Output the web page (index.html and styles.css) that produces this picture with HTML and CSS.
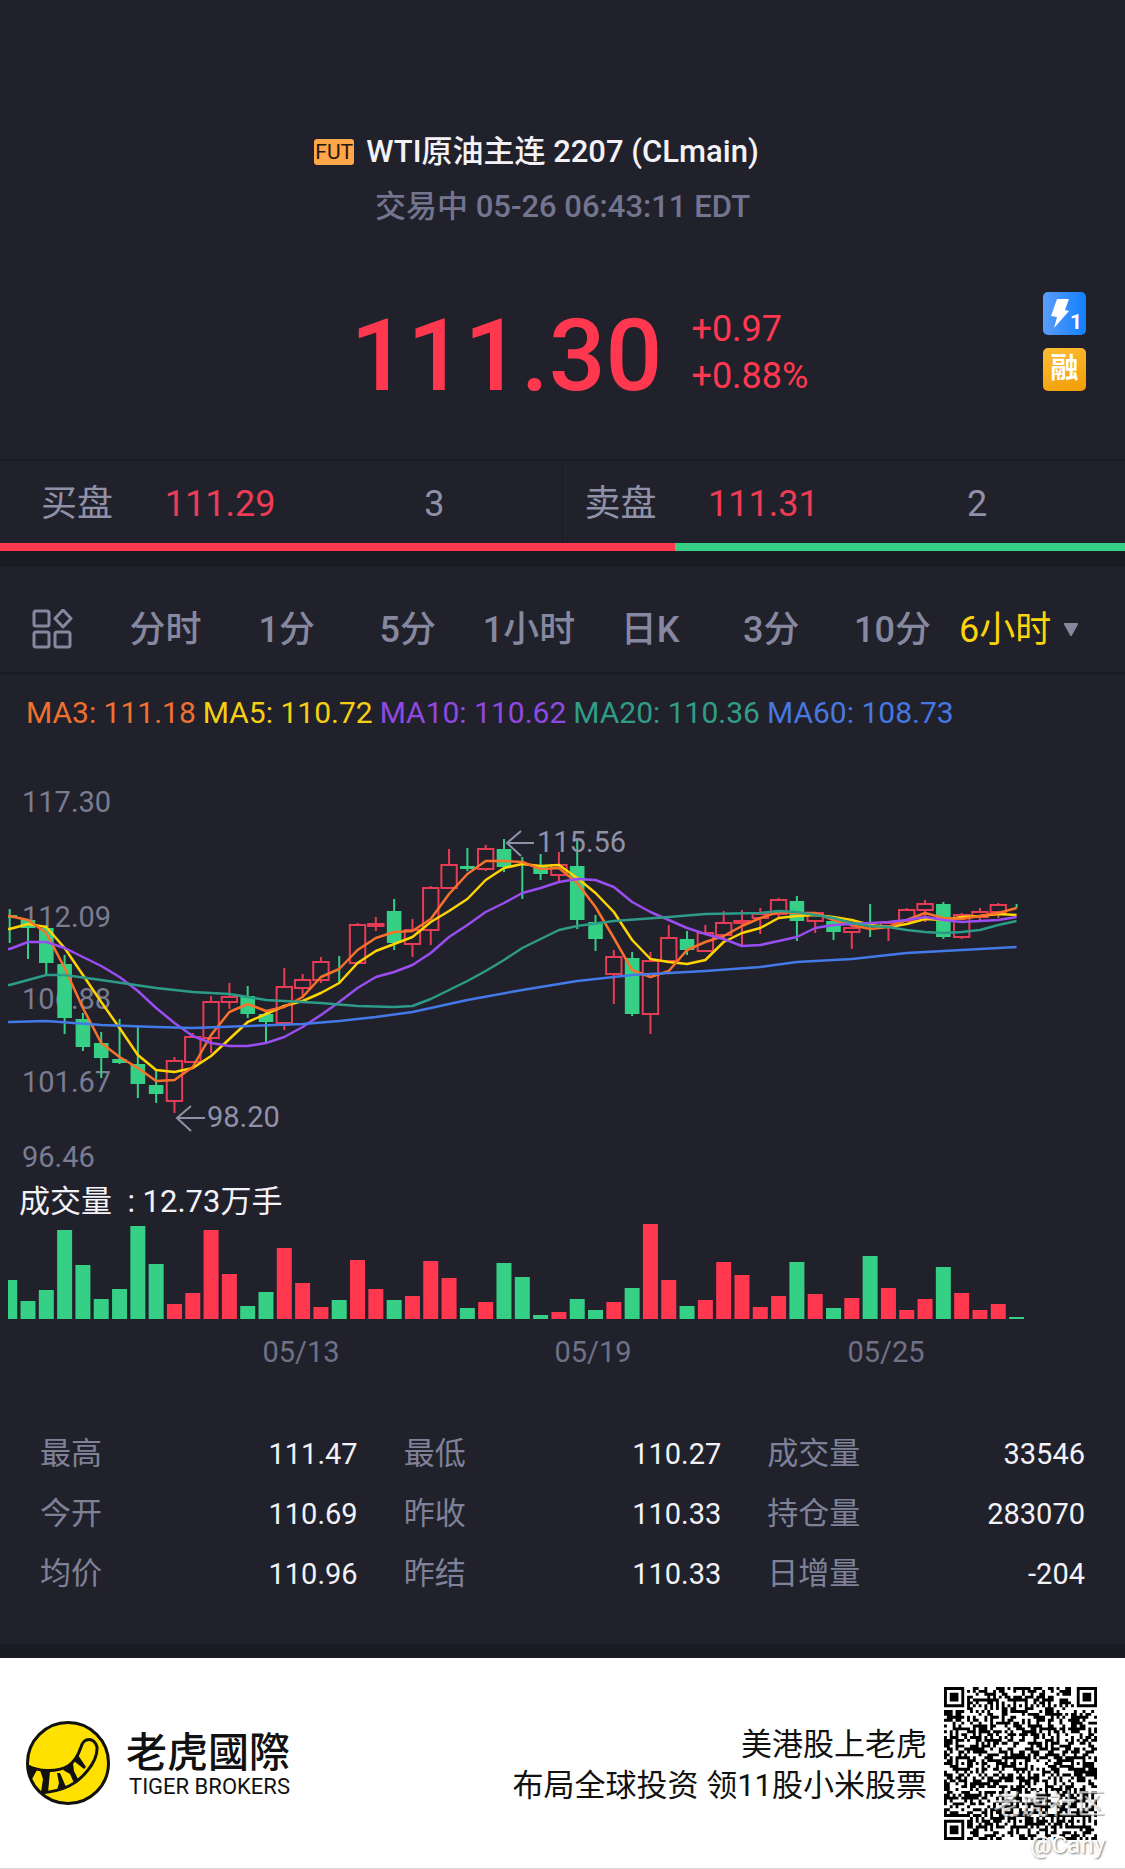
FILE: index.html
```html
<!DOCTYPE html>
<html lang="zh-CN">
<head>
<meta charset="utf-8">
<meta name="viewport" content="width=device-width, initial-scale=1">
<title>WTI原油主连 2207 (CLmain)</title>
<link rel="stylesheet" href="styles.css">
</head>
<body>
<main>
  <header class="head">
    <div class="title-row">
      <span class="fut">FUT</span>
      <h1 class="title">WTI原油主连 2207 (CLmain)</h1>
    </div>
    <p class="status">交易中 05-26 06:43:11 EDT</p>
  </header>

  <section class="quote">
    <strong class="price">111.30</strong>
    <div class="change"><span>+0.97</span><span>+0.88%</span></div>
    <div class="tags">
      <svg class="tag" viewBox="0 0 43 43" role="img" aria-label="Level 1">
        <defs><linearGradient id="blue" x1="0" y1="0" x2="1" y2="0"><stop offset="0" stop-color="#5a9cf8"/><stop offset="1" stop-color="#1280ff"/></linearGradient></defs>
        <rect width="43" height="43" rx="5" fill="url(#blue)"/>
        <path d="M14 7H26L22 18L26 19L11 36L14 25L8 24Z" fill="#fff"/>
        <text x="27" y="37" class="tag-num">1</text>
      </svg>
      <span class="tag margin-tag">融</span>
    </div>
  </section>

  <section class="book">
    <div class="side bid"><span>买盘</span><span class="up">111.29</span><span>3</span></div>
    <div class="side ask"><span>卖盘</span><span class="up">111.31</span><span>2</span></div>
  </section>
  <div class="depth"><i class="depth-bid"></i><i class="depth-ask"></i></div>

  <nav class="tabs">
    <button class="tab" aria-label="指标">
      <svg class="grid-icon" viewBox="0 0 42 42" fill="none" stroke="#86889f" stroke-width="3" stroke-linejoin="round">
        <rect x="2" y="2" width="15" height="15" rx="2"/>
        <path d="M31 1L39 9.500L31 18L23 9.500Z"/>
        <rect x="2" y="23" width="15" height="15" rx="2"/>
        <rect x="23" y="23" width="15" height="15" rx="2"/>
      </svg>
    </button>
    <button class="tab">分时</button>
    <button class="tab">1分</button>
    <button class="tab">5分</button>
    <button class="tab">1小时</button>
    <button class="tab">日K</button>
    <button class="tab">3分</button>
    <button class="tab">10分</button>
    <button class="tab active">6小时<svg class="caret" viewBox="0 0 16 14"><path d="M2 1H14L8 12Z" fill="#86889f" stroke="#86889f" stroke-width="2" stroke-linejoin="round"/></svg></button>
  </nav>

  <ul class="legend">
    <li class="ma3">MA3: 111.18</li>
    <li class="ma5">MA5: 110.72</li>
    <li class="ma10">MA10: 110.62</li>
    <li class="ma20">MA20: 110.36</li>
    <li class="ma60">MA60: 108.73</li>
  </ul>

  <svg class="chart" viewBox="0 0 1125 449" role="img" aria-label="K线图">
    <clipPath id="plot"><rect x="8" y="0" width="1010" height="449"/></clipPath>
    <g class="axis">
      <text x="22" y="80">117.30</text>
      <text x="22" y="195">112.09</text>
      <text x="22" y="277">106.88</text>
      <text x="22" y="360">101.67</text>
      <text x="22" y="435">96.46</text>
    </g>
    <g clip-path="url(#plot)"><g id="candles" transform="translate(0 38)"></g></g>
    <g class="mark">
      <path d="M534 111H507M521 99L507 111L521 124"/>
      <text x="537" y="120">115.56</text>
      <path d="M205 386H177M191 374L177 386L191 399"/>
      <text x="207" y="395">98.20</text>
    </g>
    <g clip-path="url(#plot)"><g id="averages" transform="translate(0 38)"></g></g>
  </svg>

  <p class="volume-label">成交量&nbsp; : 12.73万手</p>
  <svg class="chart" viewBox="0 0 1125 150" role="img" aria-label="成交量">
    <g id="volume"></g>
    <g class="dates">
      <text x="301" y="141">05/13</text>
      <text x="593" y="141">05/19</text>
      <text x="886" y="141">05/25</text>
    </g>
  </svg>

  <dl class="stats">
    <div><dt>最高</dt><dd>111.47</dd></div>
    <div><dt>最低</dt><dd>110.27</dd></div>
    <div><dt>成交量</dt><dd>33546</dd></div>
    <div><dt>今开</dt><dd>110.69</dd></div>
    <div><dt>昨收</dt><dd>110.33</dd></div>
    <div><dt>持仓量</dt><dd>283070</dd></div>
    <div><dt>均价</dt><dd>110.96</dd></div>
    <div><dt>昨结</dt><dd>110.33</dd></div>
    <div><dt>日增量</dt><dd>-204</dd></div>
  </dl>
</main>

<footer class="foot">
  <svg class="logo" viewBox="0 0 84 84" role="img" aria-label="老虎國際">
    <circle cx="42" cy="42" r="40.500" fill="#ffe100" stroke="#111" stroke-width="3"/>
    <path d="M2 45C12 50 30 52 42 45C50 40 53 32 55 26C58 16 68 16 71 26C72 42 54 60 43 65C33 70 25 71 15 72" fill="none" stroke="#111" stroke-width="3"/>
    <path d="M2 44L11 49L5 60ZM14 49L24 50L22 72L15 71L17 58ZM31 52L34 52L40 66L31 69L33 62ZM37 49L47 42L48 50L52 58L48 62L44 53ZM48 40L52 34L60 46L58 48Z" fill="#111"/>
  </svg>
  <div class="brand"><b>老虎國際</b><span>TIGER BROKERS</span></div>
  <p class="slogan">美港股上老虎<br>布局全球投资 领11股小米股票</p>
  <div class="code">
    <svg class="qr" viewBox="0 0 53 53" role="img" aria-label="二维码"><path id="qr" fill="#000"/></svg>
    <span class="stamp">老虎社区</span>
    <span class="author">@Cany</span>
  </div>
</footer>
<script src="chart.js"></script>
</body>
</html>
```
FILE: styles.css
```css
* { box-sizing: border-box; }
body, h1, p, ul, dl, dd { margin: 0; padding: 0; }
body {
  background: #21212b;
  color: #f2f2f7;
  font-family: Roboto, "Noto Sans CJK SC", sans-serif;
  font-size: 31px;
}
.head { padding-top: 129px; }
.title-row { display: grid; grid-template-columns: 1fr auto 1fr; align-items: center; column-gap: 12px; }
.fut {
  justify-self: end;
  width: 40px;
  background: #ffa54a;
  color: #23180e;
  border-radius: 3px;
  font-size: 21px;
  line-height: 26px;
  text-align: center;
}
.title { font-size: 31px; font-weight: 500; line-height: 46px; }
.status { margin-top: 9px; line-height: 46px; text-align: center; color: #73758f; font-weight: 500; }

.quote {
  display: grid;
  grid-template-columns: 61% 1fr auto;
  column-gap: 29px;
  align-items: start;
  padding: 62px 39px 56px 0;
  color: #ff3850;
}
.price { justify-self: end; margin-top: 17px; font-size: 100px; font-weight: 500; line-height: 94px; }
.change { display: grid; margin-top: 14px; font-size: 36px; line-height: 47px; }
.tags { display: grid; gap: 13px; }
.tag { display: block; width: 43px; height: 43px; }
.tag-num { font-size: 21px; font-weight: 700; fill: #fff; }
.margin-tag {
  border-radius: 5px;
  background: linear-gradient(160deg, #fdbd36, #f29c05);
  color: #fff;
  font-size: 28px;
  font-weight: 700;
  line-height: 42px;
  text-align: center;
}

.book { display: grid; grid-template-columns: 1fr 1fr; border-top: 2px solid #1a1b23; color: #8f91a8; font-size: 36px; line-height: 78px; }
.side { display: grid; grid-template-columns: 72px 1fr 1fr; text-align: center; }
.bid { padding: 4px 20px 0 41px; border-right: 1px solid #1a1b23; }
.ask { padding: 4px 41px 0 22px; }
.up { color: #ee3c56; }
.depth { display: flex; height: 24px; border-bottom: 16px solid #1a1b23; }
.depth-bid { flex: 3; background: #ff3850; }
.depth-ask { flex: 2; background: #35cf85; }

.tabs { display: grid; grid-template-columns: 105px repeat(7, 1fr) 172px; align-items: center; padding: 35px 0 14px; border-bottom: 2px solid #1a1b23; }
.tab { display: flex; align-items: center; justify-content: center; padding: 0; border: 0; background: none; color: #86889f; font: inherit; font-size: 36px; font-weight: 500; line-height: 56px; white-space: nowrap; }
.tab.active { justify-content: start; gap: 12px; padding-left: 6px; color: #fbd40a; font-weight: 400; }
.grid-icon { width: 42px; height: 42px; margin-right: 20px; margin-left: 20px; }
.caret { width: 16px; height: 14px; }

.legend { display: flex; gap: 7px; padding: 19px 26px 0; list-style: none; font-size: 30px; line-height: 39px; white-space: nowrap; }
.ma3 { color: #f0702f; stroke: #f8722c; }
.ma5 { color: #f5d012; stroke: #ffd400; }
.ma10 { color: #9049e0; stroke: #9a4df0; }
.ma20 { color: #2f9d87; stroke: #2c9b87; }
.ma60 { color: #4777e0; stroke: #4479e8; }
.legend li { stroke: none; }

.chart { display: block; width: 100%; height: auto; font-size: 29px; }
.axis { fill: #7a7c92; }
.mark { fill: #8f91a8; }
.mark path { fill: none; stroke: #8f91a8; stroke-width: 2; }
.dates { fill: #6f7187; text-anchor: middle; }
.average { fill: none; stroke-width: 2.500; stroke-linejoin: round; }
.rise { fill: none; stroke: #e63c56; stroke-width: 2; }
.fall { fill: #35cf85; stroke: #35cf85; stroke-width: 2; }
.vol-rise { fill: #ff3850; }
.vol-fall { fill: #35cf85; }
.volume-label { padding: 2px 0 0 19px; line-height: 38px; }

.stats { display: grid; grid-template-columns: repeat(3, 1fr); column-gap: 46px; padding: 53px 40px 40px; font-size: 29px; line-height: 60px; }
.stats div { display: flex; justify-content: space-between; }
.stats dt { color: #7f8198; font-size: 31px; }

.foot { display: flex; align-items: center; padding: 0 28px 0 26px; min-height: 225px; border-top: 14px solid #1a1b23; border-bottom: 1px solid #d8d8d8; background: #fff; color: #111; }
.logo { flex: none; width: 84px; height: 84px; margin-right: 16px; }
.brand { display: grid; white-space: nowrap; }
.brand b { font-family: "Noto Sans CJK TC", sans-serif; font-size: 41px; font-weight: 500; line-height: 48px; }
.brand span { padding-left: 3px; font-size: 22px; line-height: 28px; }
.slogan { margin-left: auto; padding-top: 4px; text-align: right; line-height: 41px; }
.code { position: relative; margin-left: 17px; }
.qr { display: block; width: 153px; height: 153px; }
.stamp { position: absolute; right: -8px; bottom: 18px; color: rgba(255, 255, 255, .6); font-size: 28px; line-height: 34px; white-space: nowrap; text-shadow: 1px 1px 1px rgba(120, 120, 120, .6); }
.author { position: absolute; right: -8px; bottom: -19px; color: #fff; font-size: 24px; line-height: 28px; text-shadow: 1px 1px 2px #777; }
```
FILE: chart.js
```js
const STEP = 18.307, FIRST = 9.7;
const NS = 'http://www.w3.org/2000/svg';
const x = i => FIRST + i * STEP;
function draw(parent, tag, attrs) {
  const node = document.createElementNS(NS, tag);
  for (const key in attrs) node.setAttribute(key, attrs[key]);
  parent.appendChild(node);
}

// direction (1 = up), high, body top, body bottom, low
const candles = [
  [0,139,146,147,173],[0,149,151,157,189],[0,155,159,192,204],[0,185,195,247,264],[0,243,250,276,281],
  [0,262,274,287,308],[0,249,290,292,294],[0,257,295,313,328],[0,300,316,323,333],[1,287,291,331,343],
  [1,263,267,292,292],[1,226,232,268,283],[1,213,227,232,239],[0,216,227,243,248],[0,242,245,251,273],
  [1,198,217,253,260],[1,204,210,218,228],[1,187,192,210,213],[0,186,201,201,212],[1,153,155,193,193],
  [1,147,154,156,161],[0,129,142,172,180],[1,149,160,174,187],[1,116,118,160,175],[1,79,95,118,118],
  [0,78,97,98,101],[1,75,79,99,101],[0,69,80,96,102],[0,87,98,98,129],[0,84,98,103,110],
  [1,82,95,105,111],[0,69,97,149,159],[0,145,153,168,181],[1,180,187,204,234],[0,182,189,243,246],
  [1,182,191,244,264],[1,155,168,191,191],[0,161,170,179,185],[1,155,163,181,181],[1,141,153,165,168],
  [1,140,151,153,175],[1,138,144,148,164],[1,128,130,144,147],[0,126,132,150,171],[1,142,143,151,163],
  [0,149,152,161,170],[1,156,158,162,179],[0,134,154,154,167],[1,151,153,156,171],[1,138,140,151,152],
  [1,130,134,140,152],[0,132,135,166,169],[1,143,145,167,169],[1,138,142,147,151],[1,133,135,142,148],
  [0,134,138,138,138]
];
const candleLayer = document.getElementById('candles');
candles.forEach(([up, high, top, bottom, low], i) => {
  const l = x(i) - (up ? 7.7 : 6.3), r = x(i) + (up ? 7.7 : 6.3), c = x(i);
  const body = bottom > top ? `M${l} ${top}H${r}V${bottom}H${l}Z` : '';
  draw(candleLayer, 'path', { class: up ? 'rise' : 'fall', d: `M${c} ${high}V${top}M${c} ${bottom}V${low}${body}${bottom === top ? `M${c} ${high}V${low}` : ''}` });
});

const averages = {
  ma60: [[0,252],[2,251],[5,255],[8,257],[10,258],[13,256],[16,254],[18,251],[20,247],[22,242],[25,230],[28,220],[31,211],[34,205],[36,203],[38,201],[41,197],[43,192],[46,189],[49,183],[51,181],[55,177]],
  ma20: [[0,215],[2,205],[3,205],[5,210],[8,218],[10,222],[12,224],[14,230],[17,233],[19,236],[21,237],[22,236],[23,229],[24,220],[25,211],[26,201],[27,190],[28,178],[29,169],[30,160],[31,156],[33,151],[36,147],[38,144],[41,143],[42,141],[43,142],[44,145],[45,148],[46,153],[47,156],[48,157],[49,160],[50,162],[51,163],[52,162],[53,160],[54,155],[55,151]],
  ma10: [179,172,172,178,187,196,207,221,238,253,266,273,276,276,273,267,257,245,232,218,207,202,195,183,167,155,142,133,123,118,112,109,110,117,132,142,150,158,164,169,176,175,171,167,158,155,154,153,152,150,147,150,152,151,150,147],
  ma5: [159,154,157,178,205,232,258,285,300,302,298,286,269,252,244,236,231,223,213,193,181,174,167,152,141,129,110,98,94,96,95,108,123,142,170,189,192,194,190,172,163,158,148,146,145,147,150,155,157,154,149,150,147,146,144,145],
  ma3: [146,150,163,198,238,273,287,298,311,310,297,265,242,234,241,237,227,207,199,180,168,162,161,149,124,104,91,91,92,99,98,113,137,168,200,207,201,180,172,166,156,148,142,143,143,150,155,159,157,150,143,148,149,146,143,138]
};
const averageLayer = document.getElementById('averages');
for (const name of ['ma5', 'ma3', 'ma10', 'ma20', 'ma60']) {
  const points = averages[name].map((p, i) => Array.isArray(p) ? p : [i, p]);
  const start = `8,${points[0][1]} `;
  draw(averageLayer, 'polyline', { class: 'average ' + name, points: start + points.map(([i, y]) => `${x(i)},${y}`).join(' ') });
}

const volume = [39,18,29,89,54,20,30,93,55,15,26,89,45,13,27,71,36,12,19,59,30,19,23,58,41,11,17,56,42,4,7,20,9,17,31,95,39,13,19,57,44,12,23,57,25,11,21,63,31,9,20,52,26,9,15,2];
const volumeLayer = document.getElementById('volume');
volume.forEach((h, i) => {
  const left = Math.max(8, x(i) - 7.5), right = x(i) + 7.5;
  draw(volumeLayer, 'rect', { class: candles[i][0] ? 'vol-rise' : 'vol-fall', x: left, y: 98 - h, width: right - left, height: h });
});

// QR modules: finder, timing and alignment patterns over a seeded data field
const N = 53;
let seed = 20220526, modules = '';
const random = () => (seed = (seed * 48271) % 2147483647) / 2147483647;
const ring = (r, c, cy, cx) => Math.max(Math.abs(r - cy), Math.abs(c - cx));
const finders = [[3, 3], [3, N - 4], [N - 4, 3]];
const aligns = [[6, 26], [26, 6], [26, 26], [26, 46], [46, 26], [46, 46]];
for (let r = 0; r < N; r++) for (let c = 0; c < N; c++) {
  let on = random() < 0.52;
  if (r === 6) on = c % 2 === 0;
  if (c === 6) on = r % 2 === 0;
  for (const [cy, cx] of aligns) { const d = ring(r, c, cy, cx); if (d <= 2) on = d !== 1; }
  for (const [cy, cx] of finders) { const d = ring(r, c, cy, cx); if (d <= 4) on = d !== 2 && d !== 4; }
  if (on) modules += `M${c} ${r}h1v1h-1z`;
}
document.getElementById('qr').setAttribute('d', modules);
```
